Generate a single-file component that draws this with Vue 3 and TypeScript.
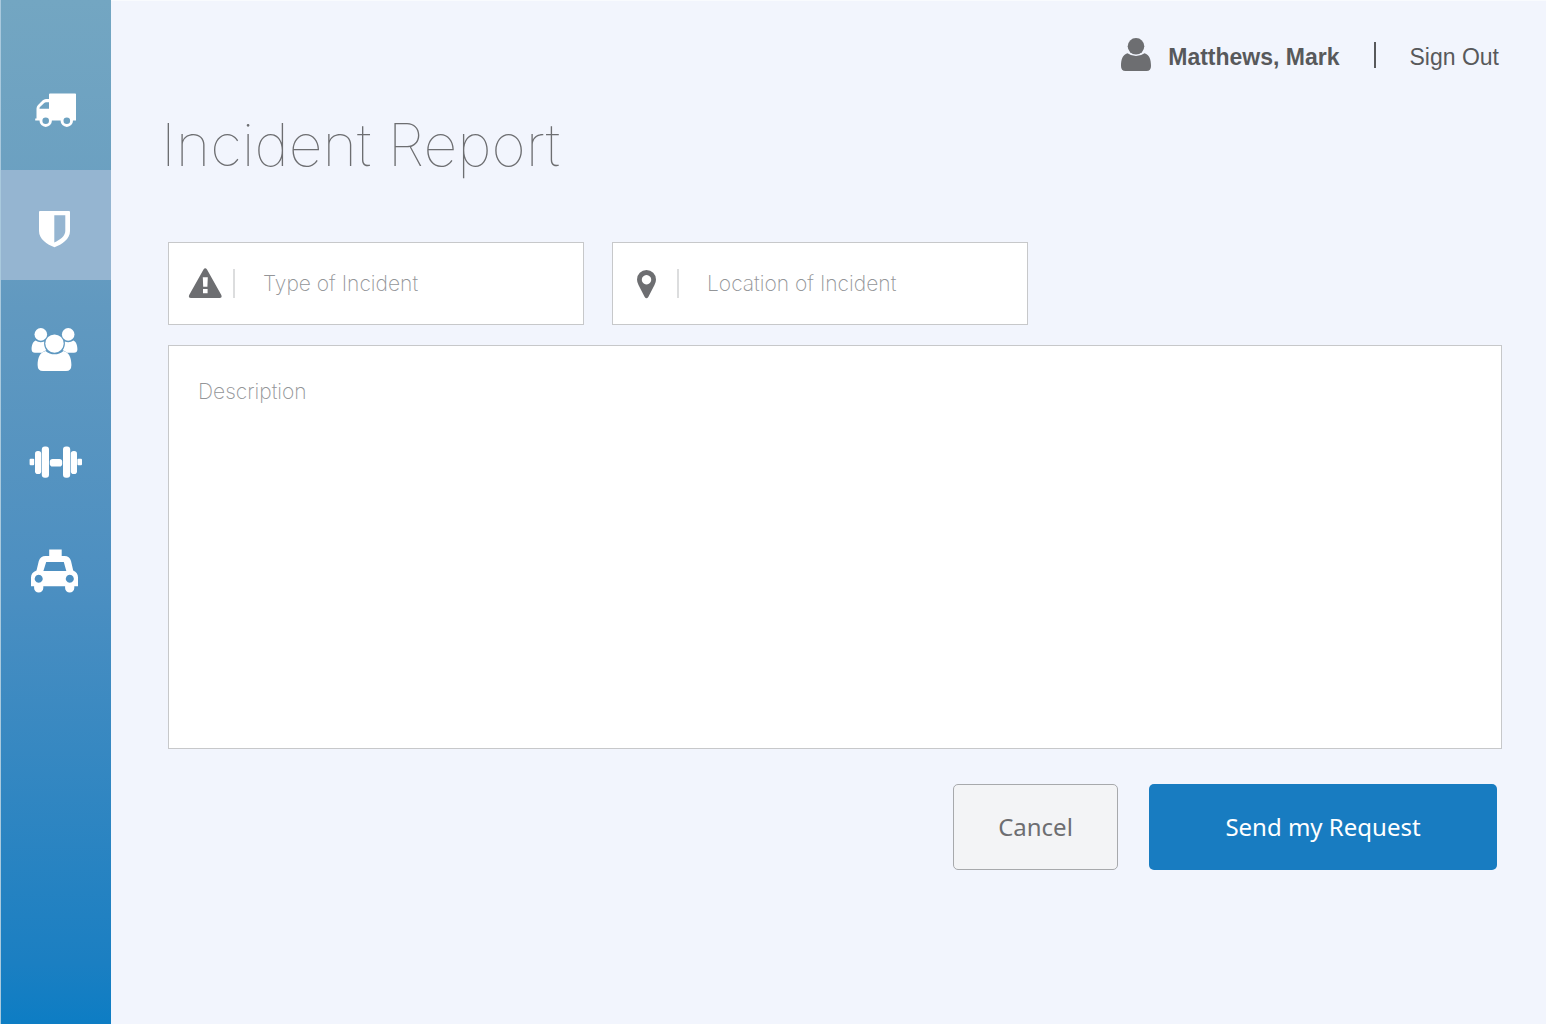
<script setup lang="ts">
import { ref } from 'vue'

interface NavItem {
  id: string
  label: string
}

const items: NavItem[] = [
  { id: 'truck', label: 'Deliveries' },
  { id: 'shield', label: 'Security' },
  { id: 'people', label: 'Visitors' },
  { id: 'gym', label: 'Fitness' },
  { id: 'taxi', label: 'Transport' },
]

const active = ref('shield')
const incidentType = ref('')
const location = ref('')
const description = ref('')

function reset(): void {
  incidentType.value = ''
  location.value = ''
  description.value = ''
}
</script>

<template>
  <div class="app">
    <nav class="sidebar" aria-label="Main">
      <button
        v-for="item in items"
        :key="item.id"
        type="button"
        class="nav-item"
        :class="{ active: active === item.id }"
        :aria-label="item.label"
        @click="active = item.id"
      >
        <svg v-if="item.id === 'truck'" class="nav-icon" viewBox="26 85 60 60">
          <path
            fill-rule="evenodd"
            d="M50 93.5H75.2Q76 93.5 76 94.3V120.5H35.2V118.5H36.5V108.500Q36.500 106.500 38 105L42.500 100.500Q44 99 46 99H49V94.500Q49 93.500 50 93.500ZM39.500 108.700H49V102.300H46Q45 102.300 44.200 103L40 107.100Q39.500 107.600 39.500 108.200Z"
          />
          <circle cx="45.700" cy="120.700" r="6.200" />
          <circle cx="66.800" cy="120.700" r="6.200" />
          <circle class="hub" cx="45.700" cy="120.700" r="3.300" />
          <circle class="hub" cx="66.800" cy="120.700" r="3.300" />
        </svg>
        <svg v-else-if="item.id === 'shield'" class="nav-icon" viewBox="26 195 60 60">
          <path
            fill-rule="evenodd"
            d="M40 211H69Q70 211 70 212V231C70 239 62 244.500 54.500 247.300C47 244.500 39 239 39 231V212Q39 211 40 211ZM54.300 215.300V242.500C60 240 65.300 236 65.300 231V215.300Z"
          />
        </svg>
        <svg v-else-if="item.id === 'people'" class="nav-icon" viewBox="26 317 60 60">
          <circle cx="40.800" cy="334.400" r="6.300" />
          <circle cx="68.200" cy="334.400" r="6.300" />
          <circle cx="54.500" cy="343.600" r="9.200" />
          <path
            d="M35.500 340.600C32.500 342 31.600 346 31.600 349.500Q31.800 352.700 35 352.700H42Q44 350.700 46.300 350.200Q43.600 346.800 44.200 341.600Q39.500 343.200 35.500 340.600Z"
          />
          <path
            d="M73.500 340.600C76.500 342 77.400 346 77.400 349.500Q77.200 352.700 74 352.700H67Q65 350.700 62.700 350.200Q65.400 346.800 64.800 341.600Q69.500 343.200 73.500 340.600Z"
          />
          <path
            d="M45.500 350.900C40 352 37.600 358 37.600 365Q37.600 371 43 371H66Q71.400 371 71.400 365C71.400 358 69 352 63.500 350.900Q59.500 354.300 54.500 354.300T45.500 350.900Z"
          />
        </svg>
        <svg v-else-if="item.id === 'gym'" class="nav-icon" viewBox="26 427 60 60">
          <rect x="29.600" y="458.700" width="4.600" height="6.600" rx="1" />
          <rect x="35" y="451" width="6.200" height="23" rx="2.800" />
          <rect x="41.800" y="446.400" width="7.200" height="31.400" rx="3" />
          <rect x="49.800" y="459" width="12.400" height="7.600" rx="2.800" />
          <rect x="63" y="446.400" width="7.200" height="31.400" rx="3" />
          <rect x="70.800" y="451" width="6.200" height="23" rx="2.800" />
          <rect x="77.400" y="458.700" width="4.600" height="6.600" rx="1" />
        </svg>
        <svg v-else class="nav-icon" viewBox="26 537 60 60">
          <path
            fill-rule="evenodd"
            d="M49.200 549.600H61.700V556H64.500Q69.500 556 71 561L73.200 570.500Q78 572.500 78 577.500V586.200H74.300V588A4.600 4.600 0 0 1 65.100 588V586.200H43.300V588A4.600 4.600 0 0 1 34.100 588V586.200H31V577.500Q31 572.500 36.500 570.500L38.800 561Q40.500 556 45.500 556H49.200ZM46.200 562L43.400 571H66.300L63.800 562ZM38.700 574.700a4 4 0 1 0 .01 0ZM69.800 574.700a4 4 0 1 0 .01 0Z"
          />
        </svg>
      </button>
    </nav>

    <main class="main">
      <header class="topbar">
        <svg class="user-icon" viewBox="0 0 32 34" aria-hidden="true">
          <circle cx="16" cy="8.300" r="8.300" />
          <path
            d="M7.500 15.300C2.500 16.500 1 22 1 28Q1 33 5.500 33H26.500Q31 33 31 28C31 22 29.500 16.500 24.500 15.300Q21 18 16 18T7.500 15.300Z"
          />
        </svg>
        <span class="user-name">Matthews, Mark</span>
        <span class="divider"></span>
        <a class="sign-out" href="#">Sign Out</a>
      </header>

      <h1 class="title">Incident Report</h1>

      <form class="form" @submit.prevent>
        <div class="fields">
          <label class="field">
            <svg class="field-icon" viewBox="0 0 36 34" aria-hidden="true">
              <path
                fill-rule="evenodd"
                d="M15.500 2.500Q17.200 0 19 2.500L33.300 28Q34.500 31 31.500 31H3Q0 31 1.200 28ZM14.800 10.300L15.200 19.800H19.400L19.800 10.300ZM15 22V26.200H19.600V22Z"
              />
            </svg>
            <span class="field-line"></span>
            <input v-model="incidentType" type="text" placeholder="Type of Incident" aria-label="Type of Incident" />
          </label>
          <label class="field">
            <svg class="field-icon" viewBox="1 0 36 34" aria-hidden="true">
              <path
                fill-rule="evenodd"
                d="M15.500 3A9.500 9.500 0 0 1 25 12.500Q25 15 23.500 18L17.300 30Q15.500 32.500 13.700 30L7.500 18Q6 15 6 12.500A9.500 9.500 0 0 1 15.500 3ZM15.500 8a4.700 4.700 0 1 0 .01 0Z"
              />
            </svg>
            <span class="field-line"></span>
            <input v-model="location" type="text" placeholder="Location of Incident" aria-label="Location of Incident" />
          </label>
        </div>
        <textarea v-model="description" class="description" placeholder="Description" aria-label="Description"></textarea>
        <div class="actions">
          <button type="button" class="btn cancel" @click="reset">Cancel</button>
          <button type="submit" class="btn send">Send my Request</button>
        </div>
      </form>
    </main>
  </div>
</template>

<style>
body {
  margin: 0;
  background: #f2f5fd;
}
</style>

<style scoped>
.app {
  display: grid;
  grid-template-columns: 111px 1fr;
  min-height: 100vh;
  background: #f2f5fd;
  font-family: Inter, 'Liberation Sans', sans-serif;
}

.sidebar {
  display: flex;
  flex-direction: column;
  box-sizing: border-box;
  padding-top: 60px;
  border-left: 1px solid #a9c9dd;
  background: linear-gradient(#73a6c2 0%, #6ba0c1 18%, #6199c0 30%, #4c8fc1 57%, #1b7fc2 94%, #0d7dc4 100%);
}

.nav-item {
  display: flex;
  align-items: center;
  justify-content: center;
  height: 110px;
  padding: 0;
  border: 0;
  background: none;
  cursor: pointer;
}

.nav-item.active {
  margin-bottom: 12px;
  background: #95b5d1;
}

.nav-icon {
  width: 60px;
  height: 60px;
  fill: #fff;
}

.hub {
  fill: #6da2c1;
}

.main {
  box-sizing: border-box;
  min-width: 0;
  padding: 0 44px 40px 57px;
  border-top: 1px solid #f9fbfe;
}

.topbar {
  display: flex;
  align-items: center;
  justify-content: flex-end;
  height: 108px;
  padding-right: 3px;
  color: #58595b;
  font-family: 'Liberation Sans', Arial, sans-serif;
  font-size: 23px;
  line-height: 28px;
}

.user-icon {
  width: 32px;
  height: 34px;
  margin-right: 16px;
  fill: #6d6e71;
}

.user-name,
.sign-out {
  padding-top: 3px;
}

.user-name {
  font-weight: 700;
}

.divider {
  width: 2px;
  height: 26px;
  margin: 0 34px;
  background: #58595b;
}

.sign-out {
  color: inherit;
  text-decoration: none;
}

.title {
  margin: 0 0 61px -7px;
  color: #6d6e71;
  font-size: 59px;
  font-weight: 100;
  line-height: 72px;
}

.fields {
  display: flex;
  gap: 28px;
  margin-bottom: 20px;
}

.field {
  display: flex;
  align-items: center;
  flex: 0 1 416px;
  min-width: 0;
  box-sizing: border-box;
  height: 83px;
  padding: 0 19px;
  border: 1px solid #c7c8ca;
  background: #fff;
}

.field-icon {
  flex: none;
  width: 36px;
  height: 34px;
  fill: #6d6e71;
}

.field-line {
  flex: none;
  width: 2px;
  height: 29px;
  margin: 0 28px 0 9px;
  background: #dcddde;
}

.field input {
  flex: 1;
  width: 100%;
  min-width: 0;
  padding: 0;
  border: 0;
  outline: 0;
  background: none;
}

.field input,
.description {
  color: #6d6e71;
  font-family: inherit;
  font-size: 21px;
  font-weight: 200;
  line-height: 28px;
}

::placeholder {
  color: #939598;
  opacity: 1;
}

.description {
  display: block;
  box-sizing: border-box;
  width: 100%;
  height: 404px;
  padding: 32px 29px;
  border: 1px solid #c7c8ca;
  border-radius: 0;
  outline: 0;
  resize: none;
  background: #fff;
}

.actions {
  display: flex;
  justify-content: flex-end;
  gap: 31px;
  margin-top: 35px;
  padding-right: 5px;
}

.btn {
  box-sizing: border-box;
  height: 86px;
  border-radius: 5px;
  font-family: 'Noto Sans', sans-serif;
  font-size: 24px;
  line-height: 32px;
  cursor: pointer;
}

.cancel {
  width: 165px;
  border: 1px solid #a7a9ac;
  background: #f3f4f6;
  color: #6d6e71;
}

.send {
  width: 348px;
  border: 0;
  background: #187cc1;
  color: #fff;
}
</style>
